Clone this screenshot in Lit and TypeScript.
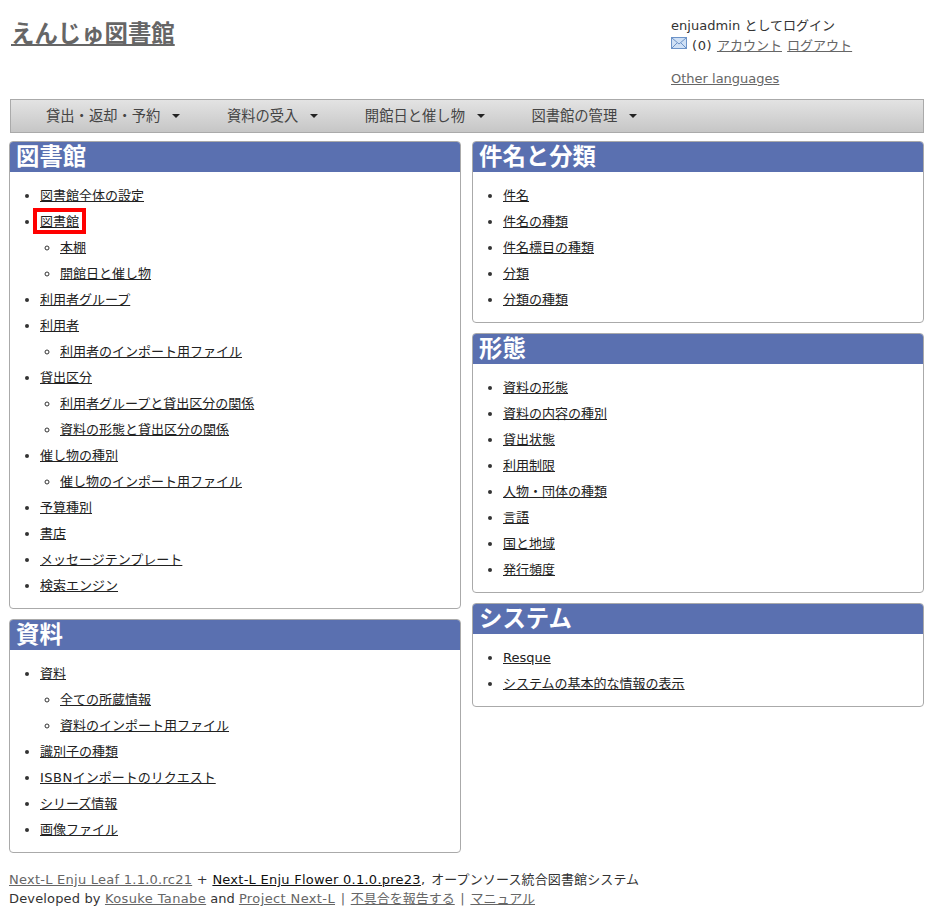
import { LitElement, html, css } from "lit";
import { customElement } from "lit/decorators.js";

type Item = { t: string; latin?: string; sub?: string[]; mark?: boolean };
type Panel = { title: string; items: Item[] };

const left: Panel[] = [
  {
    title: "図書館",
    items: [
      { t: "図書館全体の設定" },
      { t: "図書館", mark: true, sub: ["本棚", "開館日と催し物"] },
      { t: "利用者グループ" },
      { t: "利用者", sub: ["利用者のインポート用ファイル"] },
      { t: "貸出区分", sub: ["利用者グループと貸出区分の関係", "資料の形態と貸出区分の関係"] },
      { t: "催し物の種別", sub: ["催し物のインポート用ファイル"] },
      { t: "予算種別" },
      { t: "書店" },
      { t: "メッセージテンプレート" },
      { t: "検索エンジン" },
    ],
  },
  {
    title: "資料",
    items: [
      { t: "資料", sub: ["全ての所蔵情報", "資料のインポート用ファイル"] },
      { t: "識別子の種類" },
      { latin: "ISBN", t: "インポートのリクエスト" },
      { t: "シリーズ情報" },
      { t: "画像ファイル" },
    ],
  },
];
const right: Panel[] = [
  {
    title: "件名と分類",
    items: [{ t: "件名" }, { t: "件名の種類" }, { t: "件名標目の種類" }, { t: "分類" }, { t: "分類の種類" }],
  },
  {
    title: "形態",
    items: [
      { t: "資料の形態" },
      { t: "資料の内容の種別" },
      { t: "貸出状態" },
      { t: "利用制限" },
      { t: "人物・団体の種類" },
      { t: "言語" },
      { t: "国と地域" },
      { t: "発行頻度" },
    ],
  },
  { title: "システム", items: [{ t: "Resque" }, { t: "システムの基本的な情報の表示" }] },
];
const menu = ["貸出・返却・予約", "資料の受入", "開館日と催し物", "図書館の管理"];

@customElement("app-root")
export class AppRoot extends LitElement {
  static styles = css`
    :host {
      display: block;
      font-family: "DejaVu Sans", "Noto Sans CJK JP", sans-serif;
      font-size: 13px;
      line-height: 20px;
      color: #333;
      height: 913px;
      overflow: hidden;
    }
    a { color: #666; text-decoration: underline; }
    .page { padding: 0 22px 0 10px; width: 914px; }
    .header { display: flex; height: 99px; }
    .logo { flex: 0 0 660px; padding: 18px 0 0 1px; }
    .logo a {
      font-size: 23.4px;
      line-height: 32px;
      font-weight: bold;
      color: #666;
    }
    .user { padding-top: 16px; }
    .user .row { display: flex; align-items: center; height: 20px; white-space: pre; }
    .user svg { margin: -6px 5px 0 0; display: block; }
    .user .count { letter-spacing: 0.6px; }
    .user .gap { margin-left: 1px; }
    .user .lang { margin-top: 13px; }
    .user .login { letter-spacing: 0.05px; }
    .menu {
      display: flex;
      height: 32px;
      border: 1px solid #aaa;
      background: linear-gradient(#e3e3e3, #c6c6c6);
      padding-left: 35px;
      gap: 46.5px;
      align-items: center;
      font-size: 14.3px;
    }
    .menu .mi { display: flex; align-items: center; color: #444; }
    .menu .caret {
      margin-left: 12px;
      width: 0;
      height: 0;
      border-left: 4px solid transparent;
      border-right: 4px solid transparent;
      border-top: 4px solid #222;
    }
    .cols { display: flex; justify-content: space-between; margin: 8px 0 0 -1px; width: 915px; }
    .col { width: 452px; display: flex; flex-direction: column; gap: 10px; }
    .panel {
      border: 1px solid #aaa;
      border-radius: 4px;
      background: #fff;
      overflow: hidden;
    }
    .panel h2 {
      margin: 0;
      height: 30px;
      background: #5a70b0;
      color: #fff;
      font-size: 23.4px;
      line-height: 31px;
      font-weight: bold;
      padding-left: 6px;
      white-space: nowrap;
      overflow: hidden;
    }
    ul { list-style: disc; margin: 0; padding: 0 0 0 30px; }
    .panel > ul { padding-top: 11px; padding-bottom: 9px; }
    ul ul { list-style: circle; padding-left: 20px; }
    li { line-height: 26px; }
    li a { color: #222; }
    li .latin { letter-spacing: 0.5px; }
    .mark {
      display: inline-block;
      vertical-align: top;
      line-height: 19px;
      padding: 0 3px;
      margin: -1px -7px 1px;
      border: 4px solid #f00;
      box-sizing: border-box;
      height: 26px;
    }
    .footer { margin: 17px 0 0 -1px; line-height: 19px; }
    .footer .dark { color: #111; }
    .footer .wide { letter-spacing: 0.25px; }
    .footer .wider { letter-spacing: 0.38px; }
    .footer .dev { letter-spacing: 0.15px; }
    .footer .plus { margin: 0 0.5px; }
    .footer .desc { margin-left: 2px; letter-spacing: 0.12px; }
    .footer .sep { color: #666; margin: 0 1.5px; }
  `;

  private item(i: Item) {
    const text = html`<a href="#">${i.latin ? html`<span class="latin">${i.latin}</span>` : ""}${i.t}</a>`;
    return html`<li>
      ${i.mark ? html`<span class="mark">${text}</span>` : text}
      ${i.sub ? html`<ul>${i.sub.map((s) => html`<li><a href="#">${s}</a></li>`)}</ul>` : ""}
    </li>`;
  }

  private panel(p: Panel) {
    return html`<section class="panel">
      <h2>${p.title}</h2>
      <ul>${p.items.map((i) => this.item(i))}</ul>
    </section>`;
  }

  render() {
    return html`<div class="page">
      <header class="header">
        <div class="logo"><a href="#">えんじゅ図書館</a></div>
        <div class="user">
          <div><span class="login">enjuadmin </span>としてログイン</div>
          <div class="row">
            <svg width="16" height="12" viewBox="0 0 16 12">
              <rect x="0.5" y="0.5" width="15" height="11" fill="#cfe0f5" stroke="#6c93c8" />
              <path d="M1 1l7 6 7-6M1 11l5-5M15 11l-5-5" fill="none" stroke="#6c93c8" />
            </svg>
            <span class="count">(0) </span><a href="#">アカウント</a><span class="gap"> </span><a href="#">ログアウト</a>
          </div>
          <div class="lang"><a href="#">Other languages</a></div>
        </div>
      </header>
      <nav class="menu">
        ${menu.map((m) => html`<div class="mi"><span>${m}</span><span class="caret"></span></div>`)}
      </nav>
      <div class="cols">
        <div class="col">${left.map((p) => this.panel(p))}</div>
        <div class="col">${right.map((p) => this.panel(p))}</div>
      </div>
      <footer class="footer">
        <div><a class="wide" href="#">Next-L Enju Leaf 1.1.0.rc21</a> <span class="plus">+</span> <a class="dark wide" href="#">Next-L Enju Flower 0.1.0.pre23</a>, <span class="desc">オープンソース統合図書館システム</span></div>
        <div><span class="dev">Developed by </span><a class="wider" href="#">Kosuke Tanabe</a> and <a class="wider" href="#">Project Next-L</a> <span class="sep">|</span> <a href="#">不具合を報告する</a> <span class="sep">|</span> <a href="#">マニュアル</a></div>
      </footer>
    </div>`;
  }
}
